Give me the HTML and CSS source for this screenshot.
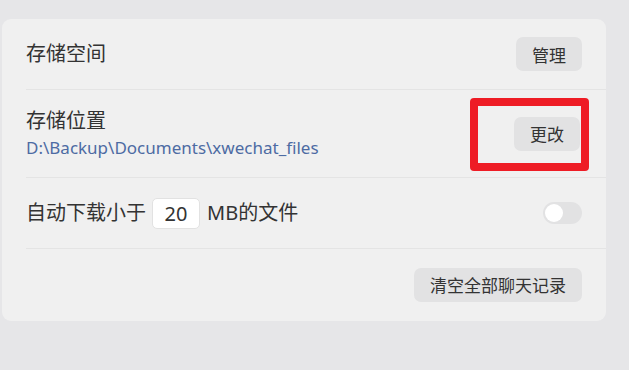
FILE: index.html
```html
<!DOCTYPE html>
<html lang="zh-CN">
<head>
    <meta charset="UTF-8">
    <title>存储设置</title>
    <link rel="stylesheet" href="styles.css">
</head>
<body>
    <div class="card">
        <div class="row">
            <div class="label">存储空间</div>
            <button class="btn">管理</button>
        </div>

        <div class="row row-tall">
            <div class="info">
                <div class="label">存储位置</div>
                <div class="path">D:\Backup\Documents\xwechat_files</div>
            </div>
            <span class="mark-wrap">
                <button class="btn">更改</button>
                <span class="mark"></span>
            </span>
        </div>

        <div class="row">
            <div class="label inline">
                自动下载小于
                <input class="size" type="text" value="20">
                MB的文件
            </div>
            <div class="toggle"><span class="knob"></span></div>
        </div>

        <div class="row row-end">
            <button class="btn">清空全部聊天记录</button>
        </div>
    </div>
</body>
</html>
```

FILE: styles.css
```css
:root {
    --bg: #e6e6e8;
    --card: #f0f0f0;
    --text: #333333;
    --line: #e4e4e4;
    --btn: #e2e2e3;
    --link: #4d6ba3;
}

* {
    box-sizing: border-box;
    margin: 0;
    padding: 0;
    font-family: "Noto Sans", "Noto Sans CJK SC", sans-serif;
}

body {
    background: var(--bg);
    padding: 19px 0 0 2px;
    width: 629px;
    height: 370px;
    overflow: hidden;
}

.card {
    width: 604px;
    background: var(--card);
    border-radius: 9px;
    padding-bottom: 1px;
}

.row {
    display: flex;
    align-items: center;
    justify-content: space-between;
    margin-left: 24px;
    padding-right: 24px;
    height: 71px;
    border-bottom: 1px solid var(--line);
}

.row:last-child {
    border-bottom: none;
}

.row-tall {
    height: 88px;
}

.row-end {
    justify-content: flex-end;
}

.label {
    font-size: 20px;
    color: var(--text);
    line-height: 26px;
}

.inline {
    display: flex;
    align-items: center;
}

.path {
    font-size: 17px;
    color: var(--link);
    line-height: 24px;
    margin-top: 2px;
}

.btn {
    height: 34px;
    padding: 0 16px;
    border: none;
    border-radius: 7px;
    background: var(--btn);
    color: var(--text);
    font-size: 17px;
}

.size {
    width: 48px;
    height: 31px;
    margin: 0 7px 0 6px;
    border: 1px solid #e2e2e2;
    border-radius: 5px;
    background: #fff;
    font-size: 20px;
    color: var(--text);
    text-align: center;
    outline: none;
}

.toggle {
    width: 39px;
    height: 22px;
    border-radius: 11px;
    background: #e2e2e3;
    padding: 2px;
}

.knob {
    display: block;
    width: 18px;
    height: 18px;
    border-radius: 50%;
    background: #fff;
}

/* 标注框 */
.mark-wrap {
    position: relative;
    display: inline-block;
    margin-right: 2px;
}

.mark-wrap .btn {
    display: block;
}

.mark {
    position: absolute;
    left: -44px;
    right: -9px;
    top: -19px;
    bottom: -20px;
    border: 8px solid #ee1c25;
    border-radius: 4px;
}
```
